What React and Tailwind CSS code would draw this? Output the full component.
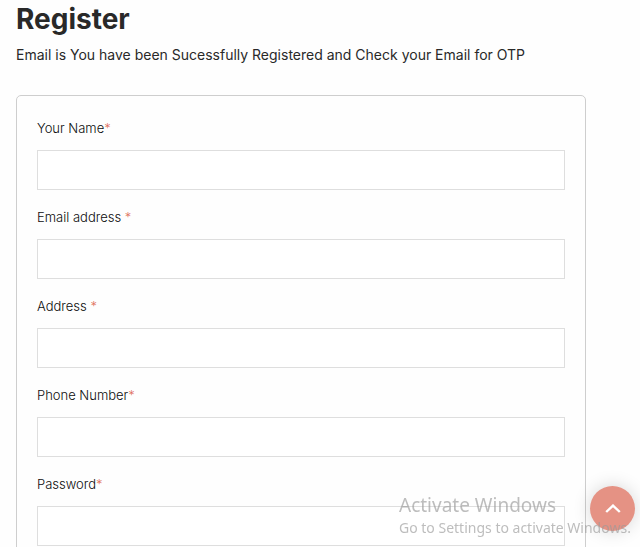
const fields = [
  { id: 'name', label: 'Your Name', type: 'text' },
  { id: 'email', label: 'Email address ', type: 'email' },
  { id: 'address', label: 'Address ', type: 'text' },
  { id: 'phone', label: 'Phone Number', type: 'tel' },
  { id: 'password', label: 'Password', type: 'password' },
];

function Field({ id, label, type }) {
  return (
    <div className="flex flex-col gap-2.5">
      <label htmlFor={id} className="whitespace-pre text-[13px] leading-6 font-light text-[#0c0c0c]">
        {label}
        <span className="text-[#e0705c]">*</span>
      </label>
      <input
        id={id}
        name={id}
        type={type}
        className="h-10 w-full border border-[#dedede] bg-white px-3 text-sm outline-none focus:border-[#e59284]"
      />
    </div>
  );
}

export default function App() {
  return (
    <div className="h-screen overflow-hidden bg-[#fefefe] font-['Inter',sans-serif] text-[#292929]">
      <main className="pr-[54px] pl-4">
        <h1 className="pt-px text-[28px] leading-9 font-bold">Register</h1>
        <p className="pt-1.5 text-sm leading-6">
          Email is You have been Sucessfully Registered and Check your Email for OTP
        </p>
        <form className="mt-7 flex flex-col gap-[15px] rounded-[5px] border border-[#cecece] p-5">
          {fields.map((field) => (
            <Field key={field.id} {...field} />
          ))}
        </form>
      </main>

      <button
        type="button"
        aria-label="Back to top"
        className="fixed right-[5px] bottom-4 flex size-[45px] items-center justify-center rounded-full bg-[#e59284] text-white shadow-[0_0_18px_rgba(0,0,0,0.16)]"
      >
        <svg viewBox="0 0 16 10" className="h-2.5 w-4" fill="none" stroke="currentColor" strokeWidth="2.4">
          <path d="M1.2 8 8 1.6 14.8 8" />
        </svg>
      </button>

      <div className="pointer-events-none fixed right-[5px] bottom-2 w-[236px] font-['Noto_Sans',sans-serif] whitespace-nowrap text-[#999999]/65">
        <p className="text-[19px] leading-6">Activate Windows</p>
        <p className="text-sm leading-[22px]">Go to Settings to activate Windows.</p>
      </div>
    </div>
  );
}
